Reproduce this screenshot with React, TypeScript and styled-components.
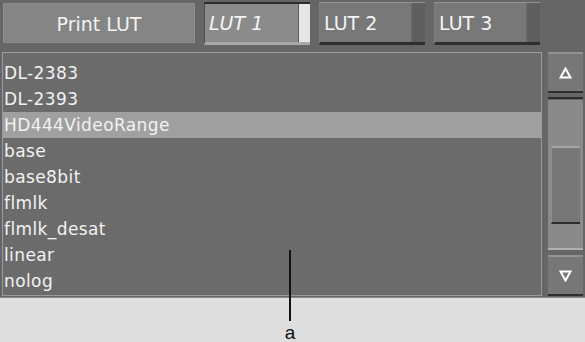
import React from 'react';
import styled, { createGlobalStyle } from 'styled-components';

const GlobalStyle = createGlobalStyle`
  body {
    margin: 0;
    background: #dedede;
    font-family: 'DejaVu Sans', sans-serif;
  }
`;

const Panel = styled.div`
  width: 585px;
  height: 298px;
  background: #666666;
  display: flex;
  flex-direction: column;
  box-sizing: border-box;
  border-bottom: 1px solid #8a8a8a;
`;

const TopBar = styled.div`
  display: flex;
  align-items: flex-start;
  padding: 2px 0 0 3px;
  height: 50px;
  box-sizing: border-box;
`;

const PrintButton = styled.div`
  width: 192px;
  height: 40px;
  margin-top: 1px;
  margin-right: 9px;
  box-sizing: border-box;
  background: #858585;
  border: 1px solid #8d8d8d;
  color: #f2f2f2;
  font-size: 19px;
  display: flex;
  align-items: center;
  justify-content: center;
  padding-top: 1px;
`;

const Tab = styled.div<{ $active?: boolean }>`
  width: 106px;
  height: 43px;
  margin-right: 9px;
  box-sizing: border-box;
  display: flex;
  background: ${(p) => (p.$active ? '#8b8b8b' : '#787878')};
  border-top: ${(p) => (p.$active ? '2px solid #2c2c2c' : '1px solid #939393')};
  border-left: 1px solid ${(p) => (p.$active ? '#4a4a4a' : '#7e7e7e')};
  border-bottom: 3px solid ${(p) => (p.$active ? '#a8a8a8' : '#2e2e2e')};
  color: #f4f4f4;
  font-size: 19px;
  font-style: ${(p) => (p.$active ? 'italic' : 'normal')};
`;

const TabLabel = styled.span`
  flex: 1;
  display: flex;
  align-items: center;
  padding-left: 4px;
`;

const TabEdge = styled.span<{ $active?: boolean }>`
  width: ${(p) => (p.$active ? '11px' : '13px')};
  background: ${(p) => (p.$active ? '#e6e6e6' : '#5f5f5f')};
  border-left: 1px solid ${(p) => (p.$active ? '#5a5a5a' : '#6a6a6a')};
`;

const Body = styled.div`
  flex: 1;
  display: flex;
  padding: 2px 2px 1px 2px;
  gap: 6px;
`;

const List = styled.div`
  width: 540px;
  box-sizing: border-box;
  border: 1px solid #9a9a9a;
  background: #6b6b6b;
  padding-top: 7px;
`;

const Row = styled.div<{ $selected?: boolean }>`
  height: 26px;
  line-height: 26px;
  padding-left: 1px;
  color: #f2f2f2;
  font-size: 17px;
  letter-spacing: 0.4px;
  background: ${(p) => (p.$selected ? '#a0a0a0' : 'transparent')};
  white-space: nowrap;
`;

const Scroll = styled.div`
  width: 35px;
  display: flex;
  flex-direction: column;
`;

const ArrowButton = styled.div`
  height: 41px;
  box-sizing: border-box;
  background: #777777;
  border-top: 2px solid #939393;
  border-bottom: 2px solid #2e2e2e;
  display: flex;
  align-items: center;
  justify-content: center;
`;

const Groove = styled.div`
  height: 2px;
  background: #2e2e2e;
  margin: 4px 0 1px;
`;

const Track = styled.div`
  flex: 1;
  background: #8a8a8a;
  border-bottom: 2px solid #b0b0b0;
  margin-bottom: 5px;
  padding: 46px 3px 0;
`;

const Thumb = styled.div`
  height: 78px;
  box-sizing: border-box;
  background: #777777;
  border-top: 2px solid #a5a5a5;
  border-left: 1px solid #8e8e8e;
  border-bottom: 2px solid #2e2e2e;
`;

const Caption = styled.div`
  display: flex;
  flex-direction: column;
  align-items: center;
  width: 580px;
  margin-top: -48px;
`;

const Leader = styled.div`
  width: 2px;
  height: 71px;
  background: #111111;
`;

const Letter = styled.div`
  font-family: 'Liberation Sans', Arial, sans-serif;
  font-size: 19px;
  line-height: 18px;
  color: #111111;
  margin-top: 3px;
`;

const Triangle: React.FC<{ down?: boolean }> = ({ down }) => (
  <svg width="13" height="12" viewBox="0 0 13 12">
    <polygon
      points={down ? '1.5,1.5 11.5,1.5 6.5,10.5' : '6.5,1.5 11.5,10.5 1.5,10.5'}
      fill="none"
      stroke="#ffffff"
      strokeWidth="2"
    />
  </svg>
);

const items = [
  'DL-2383',
  'DL-2393',
  'HD444VideoRange',
  'base',
  'base8bit',
  'flmlk',
  'flmlk_desat',
  'linear',
  'nolog',
];

export default function App() {
  return (
    <>
      <GlobalStyle />
      <Panel>
        <TopBar>
          <PrintButton>Print LUT</PrintButton>
          {['LUT 1', 'LUT 2', 'LUT 3'].map((t, i) => (
            <Tab key={t} $active={i === 0}>
              <TabLabel>{t}</TabLabel>
              <TabEdge $active={i === 0} />
            </Tab>
          ))}
        </TopBar>
        <Body>
          <List>
            {items.map((it) => (
              <Row key={it} $selected={it === 'HD444VideoRange'}>
                {it}
              </Row>
            ))}
          </List>
          <Scroll>
            <ArrowButton>
              <Triangle />
            </ArrowButton>
            <Groove />
            <Track>
              <Thumb />
            </Track>
            <ArrowButton>
              <Triangle down />
            </ArrowButton>
          </Scroll>
        </Body>
      </Panel>
      <Caption>
        <Leader />
        <Letter>a</Letter>
      </Caption>
    </>
  );
}
